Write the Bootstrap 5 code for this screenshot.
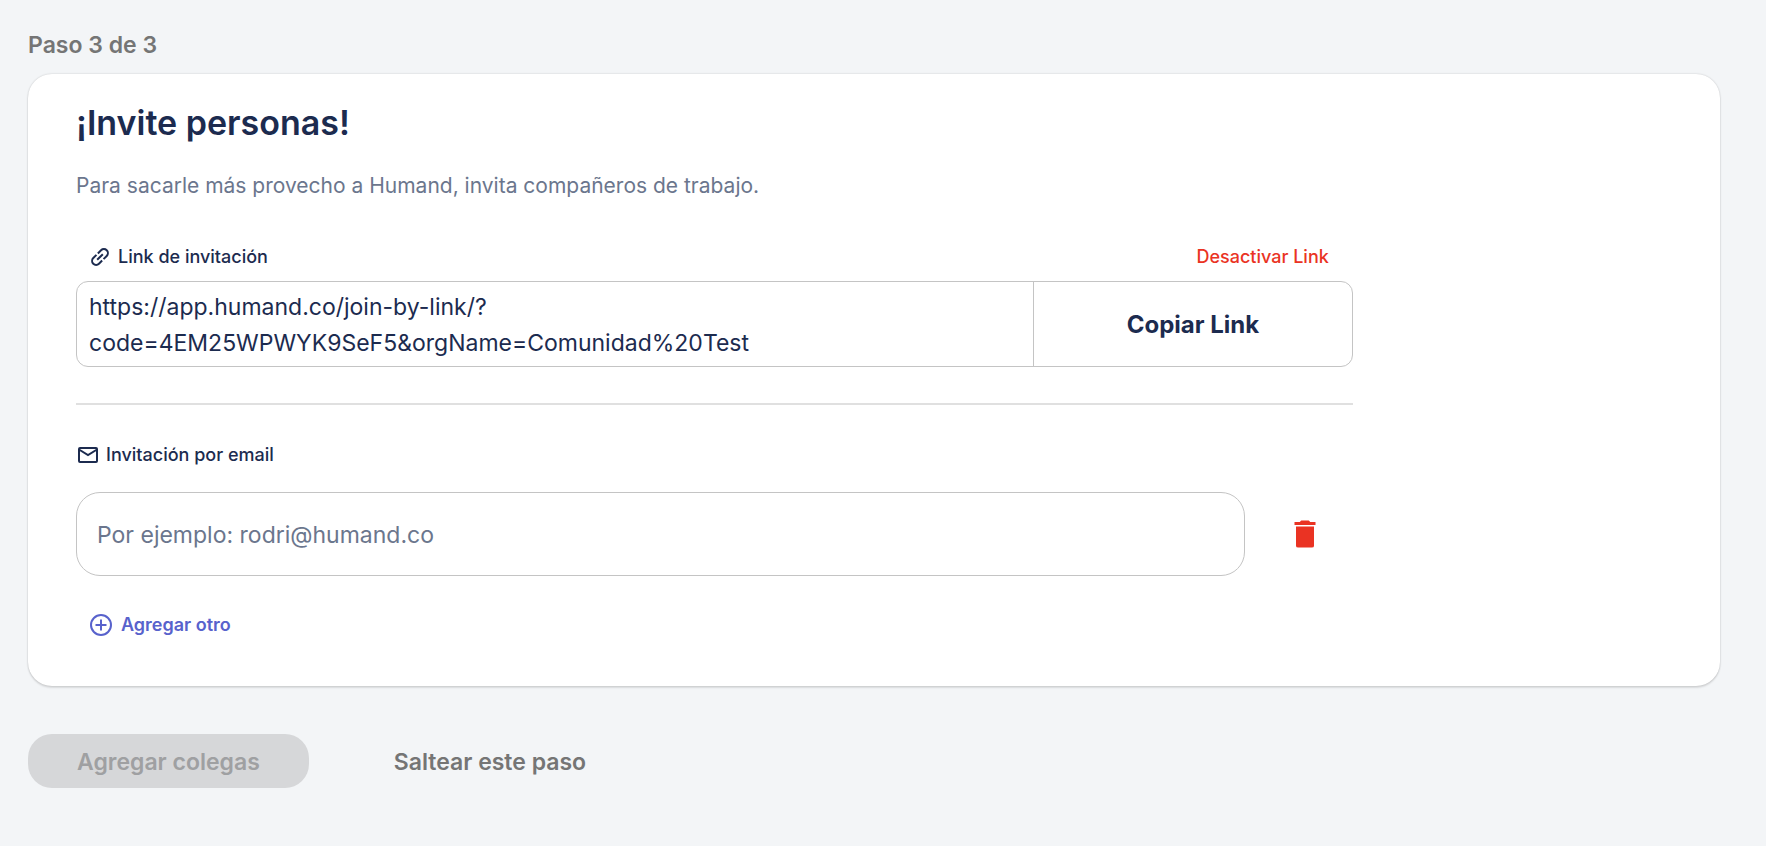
<!DOCTYPE html>
<html lang="es">
<head>
<meta charset="utf-8">
<meta name="viewport" content="width=device-width, initial-scale=1">
<title>Invite personas</title>
<link rel="stylesheet" href="https://cdn.jsdelivr.net/npm/bootstrap@5.3.0/dist/css/bootstrap.min.css">
<style>
  :root { --navy: #1c2b4f; --slate: #6b768d; --gray: #757575; --red: #ea3323; --indigo: #5862cc; --line: #c4c4c4; }
  body { background: #f3f5f7; color: var(--navy); font-family: Inter, "Liberation Sans", sans-serif; }
  .page { padding: 28px 46px 28px 28px; }
  .step { font-size: 23px; line-height: 34px; font-weight: 600; color: var(--gray); margin-bottom: 12px; }
  .panel { border: 0; border-radius: 24px; padding: 29px 48px 47px; color: inherit;
           box-shadow: 0 0 2px rgba(0,0,0,.2), 0 2px 2px rgba(0,0,0,.1); }
  .panel-body { width: 80%; }
  .panel-title { font-size: 34px; line-height: 40px; font-weight: 600; margin-bottom: 27px; }
  .intro { font-size: 21px; line-height: 32px; color: var(--slate); margin-bottom: 41px; }
  .caption { font-size: 18px; line-height: 28px; font-weight: 500; }
  .link-head { padding: 0 24px 0 12px; margin-bottom: 10px; }
  .link-head .caption, .mail-caption { gap: 6px; }
  .btn-plain { padding: 0; border: 0; font-size: 18px; line-height: 28px; }
  .btn-off, .btn-off:hover { color: var(--red); font-weight: 500; }
  .link-box { border: 1px solid var(--line); border-radius: 12px; }
  .link-url { width: 75%; padding: 7px 12px 5px; font-size: 23px; line-height: 36px; }
  .btn-copy, .btn-copy:hover { width: 25%; padding: 8px 12px 6px; border: 0; border-left: 1px solid var(--line); border-radius: 0; color: var(--navy); font-size: 24px; font-weight: 700; }
  .rule { border: 0; border-top: 2px solid #e0e0e0; opacity: 1; margin: 36px 0; }
  .mail-caption { margin-bottom: 23px; }
  .mail-input { height: 84px; padding: 2px 20px 0; border: 1px solid var(--line); border-radius: 24px; font-size: 23px; color: var(--navy); }
  .mail-input::placeholder { color: var(--slate); opacity: 1; }
  .btn-trash, .btn-trash:hover { padding: 12px; border: 0; margin: 0 18px 0 30px; color: var(--red); line-height: 1; }
  .btn-more, .btn-more:hover { color: var(--indigo); font-weight: 600; gap: 8px; margin: 35px 0 0 13px; }
  .actions { margin-top: 48px; gap: 36px; }
  .btn-step { height: 54px; padding: 2px 49px 0; border: 0; border-radius: 24px; font-size: 23px; font-weight: 600; }
  .btn-step:disabled { background: #d6d7d9; color: #9fa0a2; opacity: 1; }
  .btn-skip, .btn-skip:hover { color: var(--gray); }
  svg { display: block; flex: none; }
</style>
</head>
<body>
<main class="page">
  <p class="step">Paso 3 de 3</p>
  <section class="card panel">
    <div class="panel-body">
      <h1 class="panel-title">¡Invite personas!</h1>
      <p class="intro">Para sacarle más provecho a Humand, invita compañeros de trabajo.</p>

      <div class="link-head d-flex justify-content-between align-items-center">
        <div class="caption d-flex align-items-center">
          <svg width="24" height="24" viewBox="0 0 24 24" fill="none" stroke="currentColor" stroke-width="2" aria-hidden="true">
            <path transform="rotate(-45 12 12)" d="M11 8H6.500a4 4 0 0 0 0 8H11M13 8h4.500a4 4 0 0 1 0 8H13M8 12h8"/>
          </svg>
          <span>Link de invitación</span>
        </div>
        <button type="button" class="btn btn-plain btn-off">Desactivar Link</button>
      </div>
      <div class="link-box d-flex">
        <div class="link-url text-break">https://app.humand.co/join-by-link/?<wbr>code=4EM25WPWYK9SeF5&amp;orgName=Comunidad%20Test</div>
        <button type="button" class="btn btn-copy">Copiar Link</button>
      </div>

      <hr class="rule">

      <label class="caption mail-caption d-flex align-items-center" for="email">
        <svg width="24" height="24" viewBox="0 0 24 24" fill="none" stroke="currentColor" stroke-width="2" aria-hidden="true">
          <rect x="3" y="5" width="18" height="14" rx="1"/><path d="M3 6.500l9 5.500 9-5.500"/>
        </svg>
        <span>Invitación por email</span>
      </label>
      <div class="d-flex align-items-center">
        <input type="email" id="email" class="form-control mail-input flex-grow-1" placeholder="Por ejemplo: rodri@humand.co">
        <button type="button" class="btn btn-trash" aria-label="Eliminar">
          <svg width="36" height="36" viewBox="0 0 24 24" fill="currentColor" aria-hidden="true">
            <path d="M6 20q0 1 1.500 1h9q1.500 0 1.500-1V7H6zM19 4h-3.500l-1-1h-5l-1 1H5v2h14V4z"/>
          </svg>
        </button>
      </div>
      <button type="button" class="btn btn-plain btn-more d-flex align-items-center">
        <svg width="24" height="24" viewBox="0 0 24 24" fill="none" stroke="currentColor" stroke-width="2" aria-hidden="true">
          <circle cx="12" cy="12" r="10"/><path d="M12 6.500v11M6.500 12h11"/>
        </svg>
        <span>Agregar otro</span>
      </button>
    </div>
  </section>
  <div class="actions d-flex align-items-center">
    <button type="button" class="btn btn-step" disabled>Agregar colegas</button>
    <button type="button" class="btn btn-step btn-skip">Saltear este paso</button>
  </div>
</main>
<script src="https://cdn.jsdelivr.net/npm/bootstrap@5.3.0/dist/js/bootstrap.bundle.min.js"></script>
</body>
</html>
